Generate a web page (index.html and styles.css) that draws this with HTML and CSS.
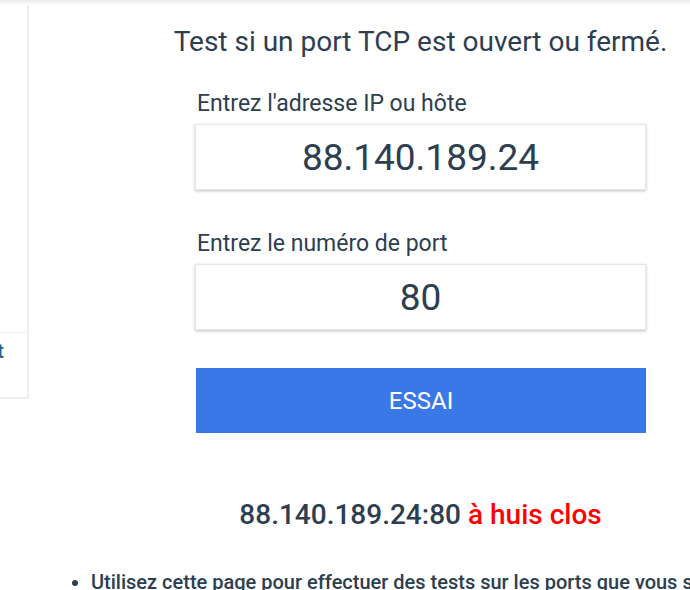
FILE: index.html
```html
<!DOCTYPE html>
<html lang="fr">
<head>
  <meta charset="UTF-8" />
  <meta name="viewport" content="width=device-width, initial-scale=1.0" />
  <title>Test de port TCP</title>
  <link rel="stylesheet" href="styles.css">
</head>
<body>
  <div class="topbar"></div>
  <div class="page">
    <aside class="sidebar">
      <div class="sideBlock"></div>
      <div class="sideItem"><a href="#">Test</a></div>
    </aside>

    <main class="main">
      <h1>Test si un port TCP est ouvert ou fermé.</h1>

      <form class="portForm" onsubmit="return false;">
        <label for="host">Entrez l'adresse IP ou hôte</label>
        <input id="host" type="text" value="88.140.189.24">

        <label for="port" class="portLabel">Entrez le numéro de port</label>
        <input id="port" type="text" value="80">

        <button type="submit">ESSAI</button>
      </form>

      <p class="result">88.140.189.24:80 <span class="closed">à huis clos</span></p>

      <ul class="notes">
        <li>Utilisez cette page pour effectuer des tests sur les ports que vous souhaitez vérifier.</li>
      </ul>
    </main>
  </div>
</body>
</html>
```

FILE: styles.css
```css
body {
  margin: 0;
  font-family: Roboto, 'Liberation Sans', sans-serif;
  color: #2c3e50;
  background: #fff;
  overflow: hidden;
}
.topbar {
  height: 5px;
  background: linear-gradient(#ebebeb, #fff);
}
.page {
  display: flex;
  align-items: flex-start;
}
.sidebar {
  flex: none;
  width: 27px;
  overflow: hidden;
  border-right: 2px solid #eee;
  border-bottom: 2px solid #eee;
}
.sideBlock {
  height: 327px;
  border-bottom: 1px solid #eee;
}
.sideItem {
  height: 64px;
  padding-right: 23px;
}
.sideItem a {
  display: flex;
  justify-content: flex-end;
  padding-top: 6px;
  font-size: 21px;
  font-weight: 500;
  color: #2b5f8a;
  text-decoration: none;
  white-space: nowrap;
}
.main {
  flex: none;
  width: 783px;
  text-align: center;
}
h1 {
  margin: 20px 0 0;
  font-size: 28px;
  line-height: 34px;
  font-weight: 400;
}
.portForm {
  width: 451px;
  margin: 31px auto 0;
  text-align: left;
}
label {
  display: block;
  margin-left: 2px;
  font-size: 23px;
  line-height: 27px;
}
.portLabel {
  margin-top: 40px;
}
input {
  display: block;
  box-sizing: border-box;
  width: 100%;
  height: 66px;
  margin: 7px 0 0;
  border: 1px solid #e6e6e6;
  box-shadow: 0 1px 3px rgba(0,0,0,0.25);
  font-family: inherit;
  font-size: 37px;
  color: #2c3e50;
  text-align: center;
  outline: none;
}
button {
  display: block;
  width: 450px;
  height: 65px;
  margin: 38px 0 0 1px;
  border: none;
  background-color: #3b78e7;
  color: #fff;
  font-family: inherit;
  font-size: 24px;
  cursor: pointer;
}
.result {
  margin: 66px 0 0;
  font-size: 28px;
  line-height: 32px;
  font-weight: 500;
}
.closed {
  color: #ff0000;
}
.notes {
  margin: 39px 0 0;
  padding-left: 62px;
  text-align: left;
  font-size: 20px;
  line-height: 24px;
  font-weight: 500;
  white-space: nowrap;
}
```
